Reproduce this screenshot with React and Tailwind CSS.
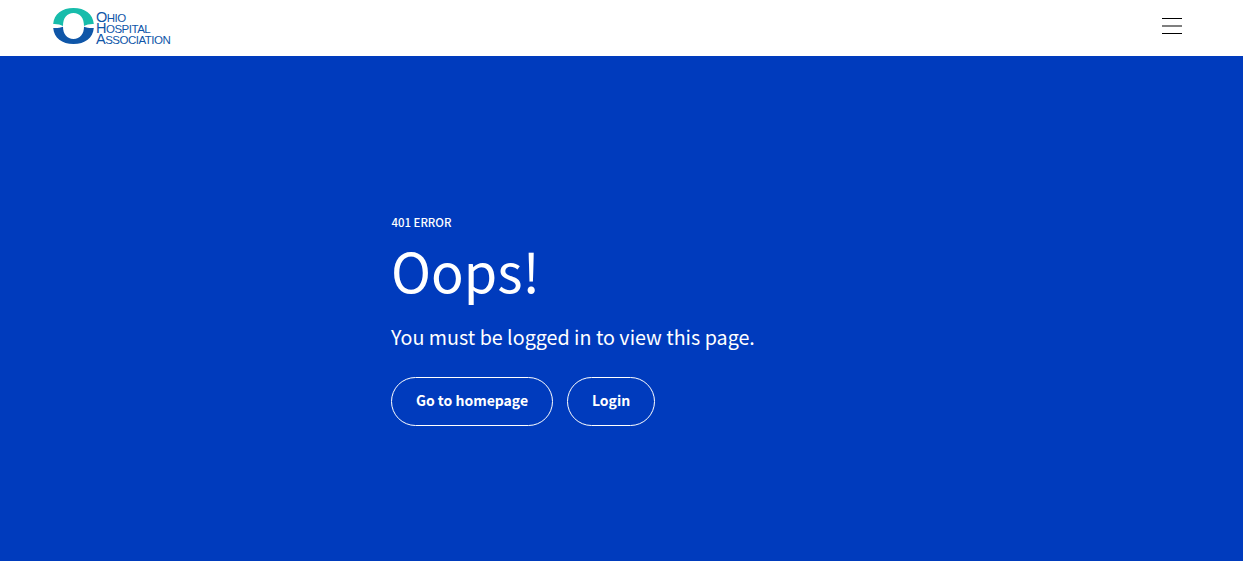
function Logo() {
  return (
    <div className="flex items-start h-9 mb-[4px]">
      <svg width="41" height="36" viewBox="0 0 41 36" className="block">
        <path d="M0.2 16C1 6 9 0 20.5 0C32 0 40 6 40.8 16C37 15.8 33.5 16.5 31 18C31 10 27 5 20.5 5C14 5 10 10 10 18C7.5 16.5 4 15.8 0.2 16Z" fill="#17bcab" />
        <path d="M0.2 20C1 30 9 36 20.5 36C32 36 40 30 40.8 20C37 20.2 33.5 19.8 31 18.8C31 26 27 31 20.5 31C14 31 10 26 10 18.8C7.5 19.8 4 20.2 0.2 20Z" fill="#0f56a8" />
      </svg>
      <div className="ml-[2px] mt-[4px] h-[33px] font-['Liberation_Sans',sans-serif] text-[#0f56a8] text-[11.5px] leading-[11px] tracking-[-0.5px] uppercase">
        <div className="h-[11px]"><span className="text-[14.5px]">O</span>hio</div>
        <div className="h-[11px]"><span className="text-[14.5px]">H</span>ospital</div>
        <div className="h-[11px]"><span className="text-[14.5px]">A</span>ssociation</div>
      </div>
    </div>
  );
}

export default function App() {
  return (
    <div className="h-[561px] flex flex-col bg-[#003bbd] font-['Noto_Sans_CJK_JP',sans-serif]">
      <header className="h-14 bg-white flex items-center justify-between pl-[53px] pr-[61px]">
        <Logo />
        <svg width="20" height="16" viewBox="0 0 20 16" className="block mb-[4px]">
          <rect x="0" y="0" width="20" height="1" fill="#000" />
          <rect x="0" y="7.5" width="20" height="1" fill="#000" />
          <rect x="0" y="15" width="20" height="1" fill="#000" />
        </svg>
      </header>
      <main className="flex-1 pl-[391px] pt-[157px] text-white">
        <p className="text-[11.4px] leading-[18px] font-medium ml-[0.5px]">401 ERROR</p>
        <h1 className="mt-[7px] text-[54px] leading-[64px] font-normal">Oops!</h1>
        <p className="mt-[20px] text-[19.7px] leading-[30px]">You must be logged in to view this page.</p>
        <div className="mt-[25px] flex gap-[14px]">
          <button className="h-[49px] w-[162px] pb-[2px] rounded-full border border-white text-[14px] font-bold">Go to homepage</button>
          <button className="h-[49px] w-[88px] pb-[2px] rounded-full border border-white text-[14px] font-bold">Login</button>
        </div>
      </main>
    </div>
  );
}
